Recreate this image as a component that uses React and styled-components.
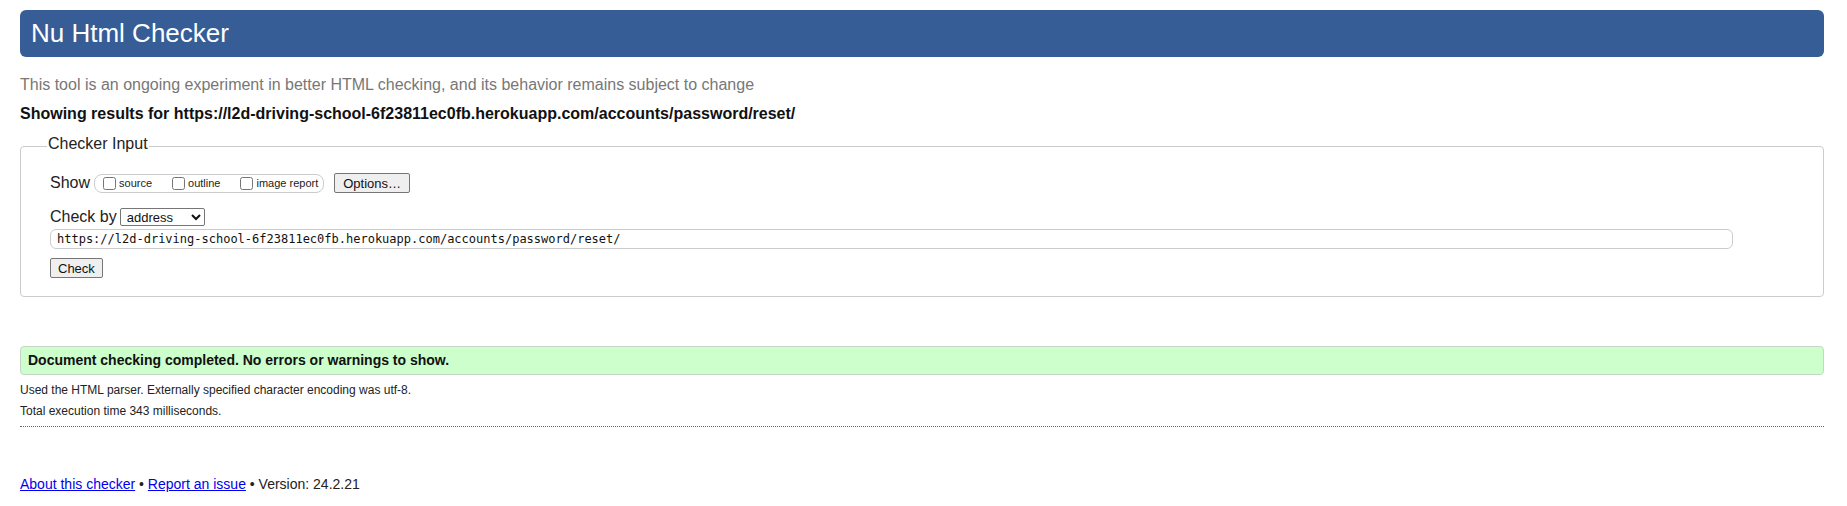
import React from 'react'
import styled, {createGlobalStyle} from 'styled-components'

const GlobalStyle = createGlobalStyle`
  html, body {
    margin: 0;
    background: #fff;
  }
  body {
    font-family: "Liberation Sans", Arial, sans-serif;
    color: #222;
  }
`;

const Page = styled.div`
  padding: 10px 23px 0 20px;
`;

const Header = styled.h1`
  margin: 0;
  height: 47px;
  line-height: 47px;
  padding-left: 11px;
  background: #365d95;
  color: #fff;
  font-size: 26px;
  font-weight: normal;
  border-radius: 6px;
`;

const Intro = styled.p`
  margin: 18px 0 0;
  font-size: 16px;
  line-height: 20px;
  color: #777;
`;

const Showing = styled.p`
  margin: 9px 0 0;
  font-size: 16px;
  line-height: 20px;
  font-weight: bold;
  color: #111;
`;

const Fieldset = styled.fieldset`
  margin: 12px 0 0;
  padding: 17px 29px 18px;
  border: 1px solid #ccc;
  border-radius: 4px;
`;

const Legend = styled.legend`
  padding: 0 1px;
  margin-left: -3px;
  font-size: 16px;
  line-height: 16px;
  padding-bottom: 4px;
  color: #222;
`;

const Row = styled.div`
  display: flex;
  align-items: center;
  height: 20px;
  margin-top: ${p => p.$gap || 0}px;
`;

const Label = styled.span`
  font-size: 16px;
  margin-right: ${p => p.$space || 4}px;
`;

const Options = styled.div`
  display: flex;
  align-items: center;
  height: 17px;
  padding: 0 5px 0 4px;
  border: 1px solid #ccc;
  border-radius: 8px;
`;

const Check = styled.label`
  display: flex;
  align-items: center;
  font-size: 11px;
  margin-right: ${p => p.$last ? 0 : 16}px;

  input {
    width: 13px;
    height: 13px;
    margin: 0 3px 0 4px;
  }
`;

const Button = styled.button`
  font-family: "Liberation Sans", Arial, sans-serif;
  font-size: 13px;
  height: 20px;
  padding: 0 ${p => p.$pad || 7}px;
  margin-left: ${p => p.$left || 0}px;
  background: #efefef;
  color: #111;
  border: 1px solid #767676;
  border-radius: 2px;
`;

const Select = styled.select`
  font-family: "Liberation Sans", Arial, sans-serif;
  font-size: 13px;
  width: 85px;
  height: 18px;
  padding: 0 2px;
  border: 1px solid #767676;
  border-radius: 2px;
  background: #fff;
  color: #111;
`;

const UrlInput = styled.input`
  display: block;
  box-sizing: border-box;
  width: calc(100% - 61px);
  height: 20px;
  margin-top: 2px;
  padding: 0 6px;
  font-family: "DejaVu Sans Mono", monospace;
  font-size: 12px;
  color: #111;
  border: 1px solid #ccc;
  border-radius: 6px;
`;

const Success = styled.div`
  margin-top: 49px;
  height: 27px;
  line-height: 27px;
  padding-left: 7px;
  background: #ccffcc;
  border: 1px solid #c6d6c6;
  border-radius: 4px;
  font-size: 14px;
  font-weight: bold;
  color: #111;
`;

const Detail = styled.p`
  margin: ${p => p.$top}px 0 0;
  font-size: 12px;
  line-height: 16px;
  color: #222;
`;

const Divider = styled.hr`
  margin: 7px 0 0;
  border: 0;
  border-top: 1px dotted #666;
`;

const Footer = styled.p`
  margin: 48px 0 0;
  font-size: 14px;
  line-height: 18px;
  color: #222;

  a {
    color: #0000ee;
  }
`;

export default function App(){
  const url = 'https://l2d-driving-school-6f23811ec0fb.herokuapp.com/accounts/password/reset/'
  return(
    <Page>
      <GlobalStyle/>
      <Header>Nu Html Checker</Header>
      <Intro>This tool is an ongoing experiment in better HTML checking, and its behavior remains subject to change</Intro>
      <Showing>Showing results for {url}</Showing>

      <Fieldset>
        <Legend>Checker Input</Legend>
        <Row>
          <Label>Show</Label>
          <Options>
            <Check><input type="checkbox"/>source</Check>
            <Check><input type="checkbox"/>outline</Check>
            <Check $last><input type="checkbox"/>image report</Check>
          </Options>
          <Button $left={10} $pad={8}>Options…</Button>
        </Row>
        <Row $gap={14}>
          <Label $space={3}>Check by</Label>
          <Select defaultValue="address">
            <option value="address">address</option>
            <option value="file">file upload</option>
            <option value="text">text input</option>
          </Select>
        </Row>
        <UrlInput defaultValue={url}/>
        <Row $gap={9}>
          <Button>Check</Button>
        </Row>
      </Fieldset>

      <Success>Document checking completed. No errors or warnings to show.</Success>
      <Detail $top={7}>Used the HTML parser. Externally specified character encoding was utf-8.</Detail>
      <Detail $top={5}>Total execution time 343 milliseconds.</Detail>
      <Divider/>

      <Footer>
        <a href="#about">About this checker</a> • <a href="#issue">Report an issue</a> • Version: 24.2.21
      </Footer>
    </Page>
  );
}
